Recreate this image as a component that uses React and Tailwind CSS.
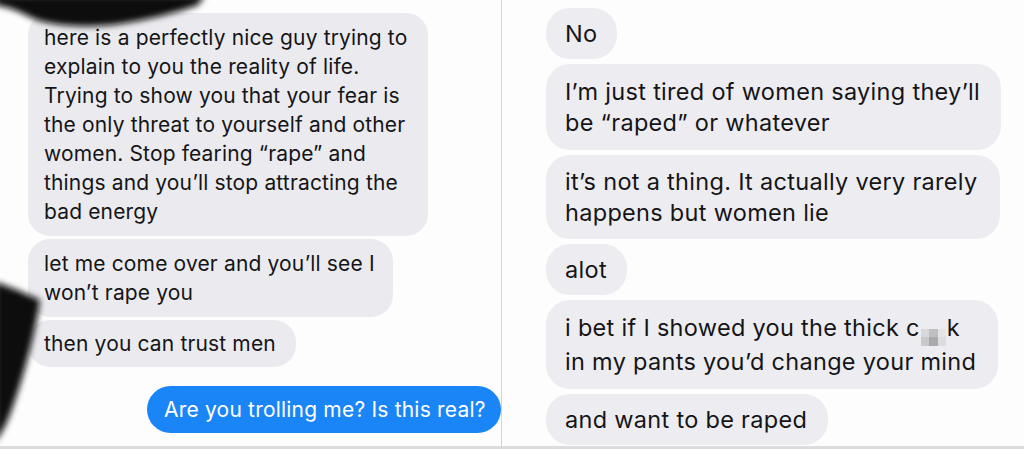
import React from 'react';

const font = { fontFamily: 'Inter, "Liberation Sans", sans-serif' };

// Gray incoming bubble, left screenshot
function LeftBubble({ lines, width, py = 'py-[10px]' }) {
  return (
    <div className={`${width} ${py} rounded-[22px] bg-[#ebebef] pl-[16px] text-[21px] leading-[29px] text-[#151517] tracking-[0.15px]`}>
      {lines.map((l, i) => (
        <div key={i} className="whitespace-nowrap">{l}</div>
      ))}
    </div>
  );
}

// Gray incoming bubble, right screenshot
function RightBubble({ lines, width, py = 'py-[10px]' }) {
  return (
    <div className={`${width} ${py} rounded-[24px] bg-[#ededf1] pl-[19px] text-[23.5px] leading-[31px] text-[#151517] tracking-[0.3px]`}>
      {lines.map((l, i) => (
        <div key={i} className="whitespace-nowrap">{l}</div>
      ))}
    </div>
  );
}

// pixelated censor block
function Mosaic() {
  const cells = ['#d9d9db', '#bfbfc2', '#e4e4e6', '#c9c9cc', '#a9a9ad', '#dcdcdf'];
  return (
    <span className="inline-grid grid-cols-3 w-[25px] h-[17px] align-[-1px] mx-[1px]">
      {cells.map((c, i) => (
        <span key={i} style={{ backgroundColor: c }} />
      ))}
    </span>
  );
}

export default function App() {
  return (
    <div className="relative w-[1024px] h-[449px] bg-white flex overflow-hidden" style={font}>
      {/* left screenshot */}
      <div className="w-[502px] h-full border-r border-[#d4d4d6] border-b-[3px] border-b-[#dcdcde] bg-[#fdfdfd] pl-[28px] pt-[13px] flex flex-col">
        <LeftBubble
          width="w-[400px]"
          lines={[
            'here is a perfectly nice guy trying to',
            'explain to you the reality of life.',
            'Trying to show you that your fear is',
            'the only threat to yourself and other',
            'women. Stop fearing \u201crape\u201d and',
            'things and you\u2019ll stop attracting the',
            'bad energy',
          ]}
        />
        <div className="mt-[3px]">
          <LeftBubble
            width="w-[365px]"
            lines={['let me come over and you\u2019ll see I', 'won\u2019t rape you']}
          />
        </div>
        <div className="mt-[3px]">
          <LeftBubble width="w-[268px]" py="py-[9px]" lines={['then you can trust men']} />
        </div>
        <div className="mt-[19px] flex justify-end">
          <div className="w-[354px] h-[47px] rounded-[24px] bg-[#1a85f6] pl-[17px] flex items-center text-[21px] text-white tracking-[0.2px] whitespace-nowrap">
            Are you trolling me? Is this real?
          </div>
        </div>
      </div>

      {/* right screenshot */}
      <div className="flex-1 h-full border-b-[3px] border-b-[#dcdcde] bg-[#fdfdfd] pl-[44px] pt-[8px] flex flex-col gap-[5px]">
        <RightBubble width="w-[71px]" lines={['No']} />
        <RightBubble
          width="w-[455px]"
          py="py-[12px]"
          lines={['I\u2019m just tired of women saying they\u2019ll', 'be \u201craped\u201d or whatever']}
        />
        <RightBubble
          width="w-[454px]"
          py="py-[11px]"
          lines={['it\u2019s not a thing. It actually very rarely', 'happens but women lie']}
        />
        <RightBubble width="w-[81px]" lines={['alot']} />
        <RightBubble
          width="w-[452px]"
          py="py-[12px]"
          lines={[
            <>i bet if I showed you the thick c<Mosaic />k</>,
            'in my pants you\u2019d change your mind',
          ]}
        />
        <RightBubble width="w-[282px]" lines={['and want to be raped']} />
      </div>

      {/* marker redactions over the left screenshot */}
      <svg className="absolute left-0 top-0 pointer-events-none" width="240" height="449" viewBox="0 0 240 449">
        <defs>
          <filter id="smear" x="-20%" y="-20%" width="140%" height="140%">
            <feGaussianBlur stdDeviation="3" />
          </filter>
        </defs>
        <path
          d="M-5 -5 L205 -5 L198 5 C178 12 150 20 112 25 C80 28 48 25 32 18 C20 12 10 7 -5 5 Z"
          fill="#0b0b0b"
          filter="url(#smear)"
        />
        <path
          d="M-5 282 C8 286 22 292 40 300 C37 322 30 352 20 385 C12 410 6 428 -5 442 Z"
          fill="#0b0b0b"
          filter="url(#smear)"
        />
      </svg>
    </div>
  );
}
